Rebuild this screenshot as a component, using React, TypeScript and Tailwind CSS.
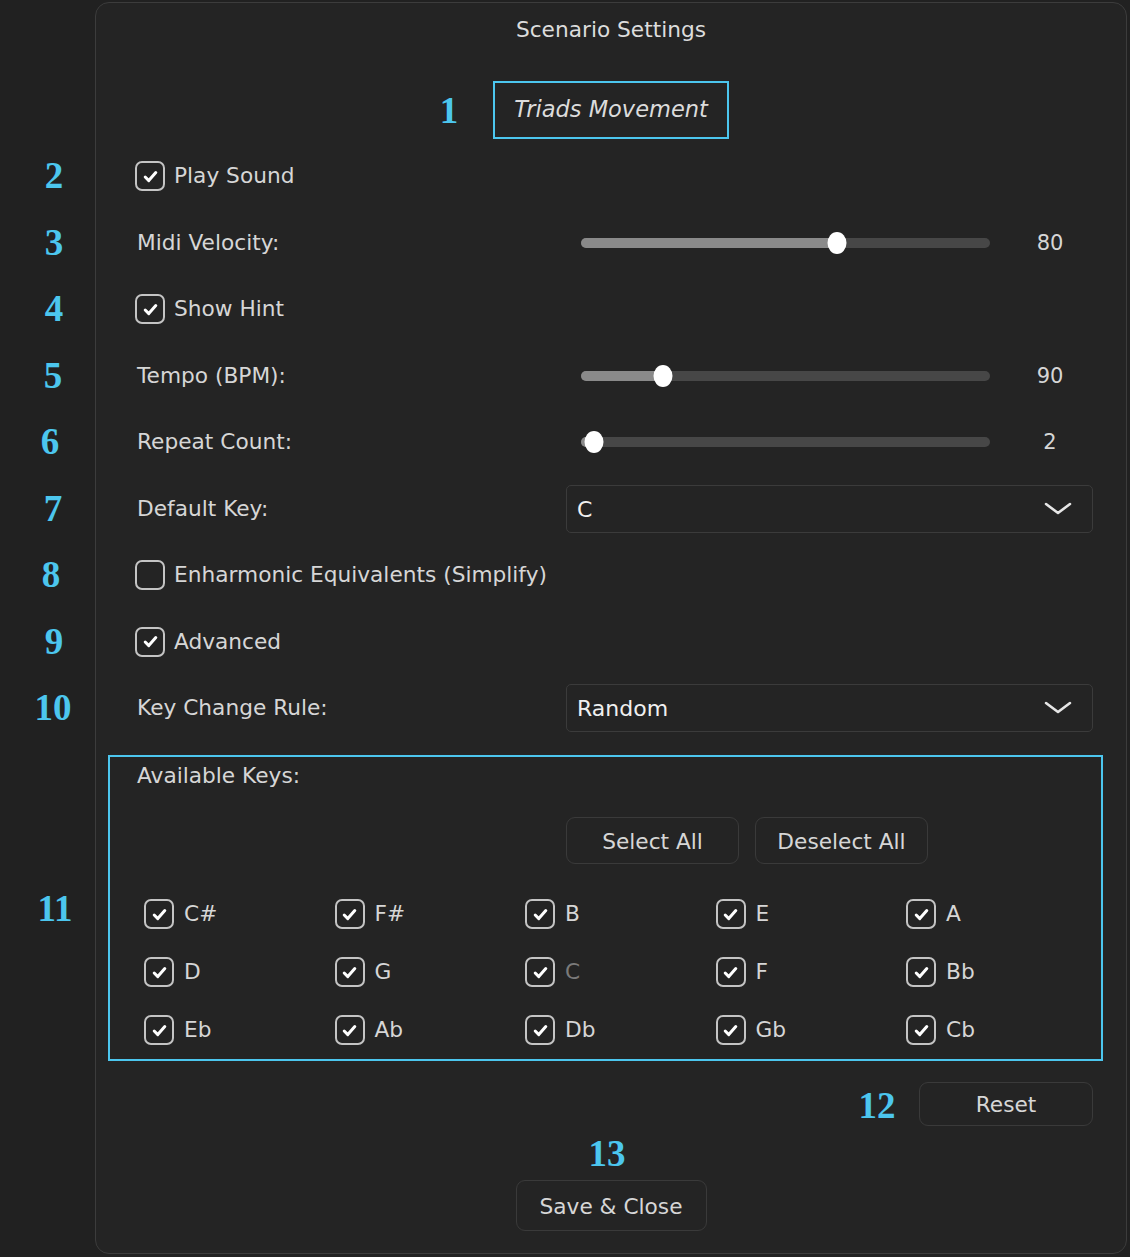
import React from "react";

const FONT = { fontFamily: '"DejaVu Sans", Verdana, sans-serif' };

function CheckIcon() {
  return (
    <svg width="15" height="13" viewBox="0 0 15 13" fill="none">
      <path d="M2.2 7 L5.8 10.6 L12.8 2.6" stroke="#ffffff" strokeWidth="3" strokeLinecap="round" strokeLinejoin="round" />
    </svg>
  );
}

function Checkbox({ checked }: { checked: boolean }) {
  return (
    <span className="flex h-[30px] w-[30px] shrink-0 items-center justify-center rounded-[7px] border-2 border-[#c4c4c4]">
      {checked && <CheckIcon />}
    </span>
  );
}

function CheckRow({ label, checked }: { label: string; checked: boolean }) {
  return (
    <div className="flex h-[66.5px] items-center pl-[39px]">
      <Checkbox checked={checked} />
      <span className="ml-[9px] pt-[1px] text-[21.7px] text-[#d6d6d6]">{label}</span>
    </div>
  );
}

function SliderRow({ label, value, pct }: { label: string; value: string; pct: number }) {
  return (
    <div className="flex h-[66.5px] items-center pl-[41px]">
      <span className="w-[444px] pt-[1px] text-[21.7px] text-[#d6d6d6]">{label}</span>
      <div className="relative h-[10px] w-[409px] rounded-full bg-[#474747]">
        <div className="h-full rounded-full bg-[#8a8a8a]" style={{ width: `${pct}%` }} />
        <div
          className="absolute top-1/2 h-[22px] w-[19px] -translate-x-1/2 -translate-y-1/2 rounded-[50%] bg-white"
          style={{ left: `${pct}%` }}
        />
      </div>
      <span className="w-[120px] pt-[1px] text-center text-[21px] text-[#d6d6d6]">{value}</span>
    </div>
  );
}

function Chevron() {
  return (
    <svg width="28" height="16" viewBox="0 0 28 16" fill="none">
      <path d="M2 3 L14 12 L26 3" stroke="#e6e6e6" strokeWidth="2.6" strokeLinecap="round" strokeLinejoin="round" />
    </svg>
  );
}

function SelectRow({ label, value }: { label: string; value: string }) {
  return (
    <div className="flex h-[66.5px] items-center pl-[41px]">
      <span className="w-[429px] pt-[1px] text-[21.7px] text-[#d6d6d6]">{label}</span>
      <div className="flex h-[48px] w-[527px] items-center justify-between rounded-[5px] border border-[#3b3b3b] pl-[10px] pr-[20px]">
        <span className="pt-[1px] text-[22px] text-[#f0f0f0]">{value}</span>
        <Chevron />
      </div>
    </div>
  );
}

const KEYS: { name: string; dim?: boolean }[] = [
  { name: "C#" }, { name: "F#" }, { name: "B" }, { name: "E" }, { name: "A" },
  { name: "D" }, { name: "G" }, { name: "C", dim: true }, { name: "F" }, { name: "Bb" },
  { name: "Eb" }, { name: "Ab" }, { name: "Db" }, { name: "Gb" }, { name: "Cb" },
];

const MARKS: { n: string; x: number; y: number }[] = [
  { n: "1", x: 449, y: 110 },
  { n: "2", x: 54, y: 175 },
  { n: "3", x: 54, y: 242 },
  { n: "4", x: 54, y: 308 },
  { n: "5", x: 53, y: 375 },
  { n: "6", x: 50, y: 441 },
  { n: "7", x: 53, y: 508 },
  { n: "8", x: 51, y: 574 },
  { n: "9", x: 54, y: 641 },
  { n: "10", x: 53, y: 707 },
  { n: "11", x: 55, y: 908 },
  { n: "12", x: 877, y: 1105 },
  { n: "13", x: 607, y: 1153 },
];

function OutlineButton({ label, className }: { label: string; className: string }) {
  return (
    <div className={`flex items-center justify-center rounded-[9px] border border-[#3a3a3a] pt-[3px] text-[21.7px] text-[#d6d6d6] ${className}`}>
      {label}
    </div>
  );
}

export default function App() {
  return (
    <div className="relative h-[1257px] w-[1130px] overflow-hidden bg-[#212121] pt-[2px]" style={FONT}>
      <div className="ml-[95px] h-[1252px] w-[1032px] rounded-[14px] border border-[#3c3c3c] bg-[#242424]">
        <div className="pt-[12px] text-center text-[21.7px] leading-[30px] text-[#dcdcdc]">Scenario Settings</div>

        <div className="mt-[36px] flex justify-center">
          <div className="flex h-[58px] w-[236px] items-center justify-center border-2 border-[#4cc6ee] text-[22.5px] italic text-[#dcdcdc]">
            Triads Movement
          </div>
        </div>

        <div className="mt-[4px]">
          <CheckRow label="Play Sound" checked />
          <SliderRow label="Midi Velocity:" value="80" pct={62.6} />
          <CheckRow label="Show Hint" checked />
          <SliderRow label="Tempo (BPM):" value="90" pct={20} />
          <SliderRow label="Repeat Count:" value="2" pct={3.2} />
          <SelectRow label="Default Key:" value="C" />
          <CheckRow label="Enharmonic Equivalents (Simplify)" checked={false} />
          <CheckRow label="Advanced" checked />
          <SelectRow label="Key Change Rule:" value="Random" />
        </div>

        <div className="ml-[12px] mt-[13.5px] h-[306px] w-[995px] border-2 border-[#4cc6ee]">
          <div className="pl-[27px] pt-[1px] text-[21.7px] leading-[36px] text-[#d6d6d6]">Available Keys:</div>
          <div className="mt-[23px] flex gap-[16px] pl-[456px]">
            <OutlineButton label="Select All" className="h-[47px] w-[173px]" />
            <OutlineButton label="Deselect All" className="h-[47px] w-[173px]" />
          </div>
          <div className="mt-[21px] grid grid-cols-[repeat(5,190.5px)] pl-[34px]">
            {KEYS.map((k) => (
              <div key={k.name} className="flex h-[58px] items-center">
                <Checkbox checked />
                <span className={`ml-[10px] pt-[1px] text-[21.7px] ${k.dim ? "text-[#7a7a7a]" : "text-[#d6d6d6]"}`}>{k.name}</span>
              </div>
            ))}
          </div>
        </div>

        <div className="mt-[21px] flex justify-end pr-[33px]">
          <OutlineButton label="Reset" className="h-[44px] w-[174px]" />
        </div>

        <div className="mt-[54px] flex justify-center">
          <OutlineButton label="Save & Close" className="h-[51px] w-[191px]" />
        </div>
      </div>

      {MARKS.map((m) => (
        <span
          key={m.n}
          className="absolute -translate-x-1/2 -translate-y-1/2 text-[37px] font-bold leading-none text-[#4cc6ee]"
          style={{ left: m.x, top: m.y, fontFamily: '"Liberation Serif", "Times New Roman", serif' }}
        >
          {m.n}
        </span>
      ))}
    </div>
  );
}
